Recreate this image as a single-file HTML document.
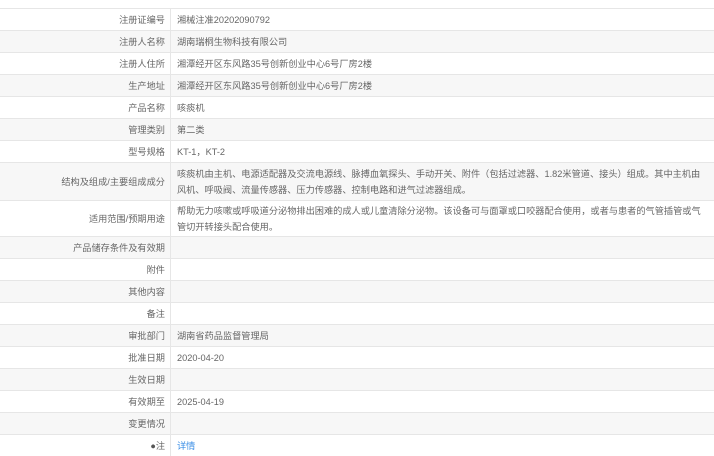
<!DOCTYPE html>
<html><head><meta charset="utf-8"><style>
body{margin:0;background:#fff;font-family:"Liberation Sans","Noto Sans CJK SC",sans-serif;font-size:9.2px;color:#666;}
table{position:absolute;top:8px;left:0;width:714px;border-collapse:collapse;}
td{border-top:1px solid #e6e6e6;height:21px;padding:0;line-height:16px;}
td.l{width:165px;text-align:right;padding-right:5px;border-right:1px solid #e6e6e6;}
td.v{padding-left:6px;padding-right:6px;}
tr:nth-child(even){background:#f7f7f7;}
tr.t td{height:37px;}
tr.t2 td{height:35px;}
a{color:#3a8ee6;text-decoration:none;}
</style></head><body>
<table>
<tr><td class="l">注册证编号</td><td class="v">湘械注准20202090792</td></tr>
<tr><td class="l">注册人名称</td><td class="v">湖南瑞桐生物科技有限公司</td></tr>
<tr><td class="l">注册人住所</td><td class="v">湘潭经开区东风路35号创新创业中心6号厂房2楼</td></tr>
<tr><td class="l">生产地址</td><td class="v">湘潭经开区东风路35号创新创业中心6号厂房2楼</td></tr>
<tr><td class="l">产品名称</td><td class="v">咳痰机</td></tr>
<tr><td class="l">管理类别</td><td class="v">第二类</td></tr>
<tr><td class="l">型号规格</td><td class="v">KT-1，KT-2</td></tr>
<tr class="t"><td class="l">结构及组成/主要组成成分</td><td class="v">咳痰机由主机、电源适配器及交流电源线、脉搏血氧探头、手动开关、附件（包括过滤器、1.82米管道、接头）组成。其中主机由风机、呼吸阀、流量传感器、压力传感器、控制电路和进气过滤器组成。</td></tr>
<tr class="t2"><td class="l">适用范围/预期用途</td><td class="v">帮助无力咳嗽或呼吸道分泌物排出困难的成人或儿童清除分泌物。该设备可与面罩或口咬器配合使用，或者与患者的气管插管或气管切开转接头配合使用。</td></tr>
<tr><td class="l">产品储存条件及有效期</td><td class="v"></td></tr>
<tr><td class="l">附件</td><td class="v"></td></tr>
<tr><td class="l">其他内容</td><td class="v"></td></tr>
<tr><td class="l">备注</td><td class="v"></td></tr>
<tr><td class="l">审批部门</td><td class="v">湖南省药品监督管理局</td></tr>
<tr><td class="l">批准日期</td><td class="v">2020-04-20</td></tr>
<tr><td class="l">生效日期</td><td class="v"></td></tr>
<tr><td class="l">有效期至</td><td class="v">2025-04-19</td></tr>
<tr><td class="l">变更情况</td><td class="v"></td></tr>
<tr><td class="l"><span style="color:#555">●</span>注</td><td class="v"><a>详情</a></td></tr>
</table>
</body></html>
